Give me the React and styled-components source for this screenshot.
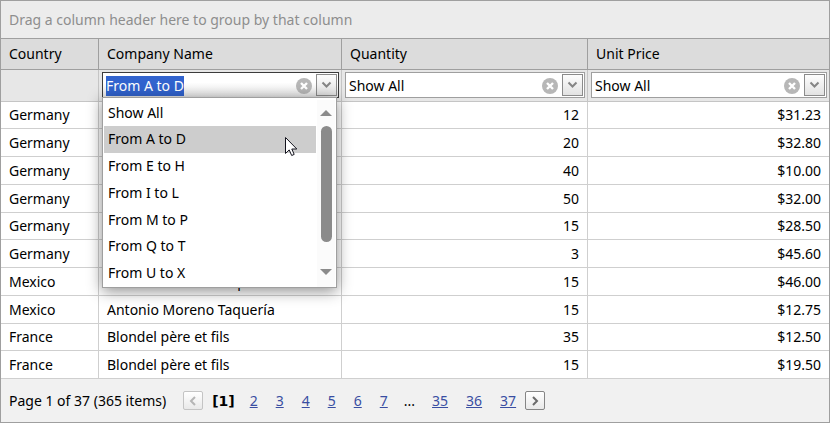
import React, { useEffect, useRef } from "react";
import styled, { createGlobalStyle } from "styled-components";

const GlobalStyle = createGlobalStyle`
  *, *::before, *::after { box-sizing: border-box; }
  body { margin: 0; background: #fff; }
  body, input, button {
    font-family: "Noto Sans", "Open Sans", sans-serif;
    font-size: 14px;
    line-height: 20px;
    color: #000;
  }
`;

const Grid = styled.main`
  border: 1px solid #9f9f9f;
  background: #fff;
`;

const GroupPanel = styled.div`
  padding: 9px 8px 8px;
  background: #ececec;
  border-bottom: 1px solid #9f9f9f;
  color: #8e8e8e;
`;

const Table = styled.table`
  width: 100%;
  table-layout: fixed;
  border-collapse: separate;
  border-spacing: 0;
`;

const Col = styled.col`
  width: ${(p) => p.$width}px;
`;

const HeaderCell = styled.th`
  height: 31px;
  padding: 0 8px;
  background: #dcdcdc;
  border-right: 1px solid #9f9f9f;
  border-bottom: 1px solid #9f9f9f;
  font-weight: 400;
  text-align: left;
  &:last-child { border-right: 0; }
`;

const FilterCell = styled.td`
  height: 32px;
  padding: 2px 2px 2px 3px;
  vertical-align: top;
  background: #e7e7e7;
  border-right: 1px solid #c5c5c5;
  border-bottom: 1px solid #c5c5c5;
  &:last-child { border-right: 0; }
`;

const Row = styled.tr`
  height: 28px;
  &:nth-child(4n + 1) { height: 27px; }
`;

const Cell = styled.td`
  padding: 0 8px;
  text-align: ${(p) => (p.$numeric ? "right" : "left")};
  border-right: 1px solid #cfcfcf;
  border-bottom: 1px solid #cfcfcf;
  &:last-child { border-right: 0; }
`;

const Combo = styled.div`
  position: relative;
  display: flex;
  align-items: center;
  height: 26px;
  padding: 1px;
  border: 1px solid ${(p) => (p.$active ? "#3c3c3c" : "#9f9f9f")};
  background: ${(p) =>
    p.$active ? "linear-gradient(#fff 40%, #e6e6e6)" : "#fff"};
`;

const ComboInput = styled.input`
  flex: 1;
  min-width: 0;
  height: 20px;
  margin: 2px 0 0;
  padding: 0 2px;
  border: 0;
  outline: 0;
  background: transparent;
  &::selection { background: #3163ce; color: #fff; }
`;

const ClearButton = styled.button`
  display: flex;
  padding: 0;
  margin: 2px 4px 0 0;
  border: 0;
  background: none;
`;

const DropButton = styled.button`
  display: flex;
  align-items: center;
  justify-content: center;
  width: 21px;
  height: 22px;
  padding: 0;
  border: 1px solid #8b8b8b;
  background: linear-gradient(#fdfdfd, #e2e2e2);
`;

const Popup = styled.div`
  position: absolute;
  z-index: 2;
  top: 24px;
  left: -1px;
  right: 1px;
  display: flex;
  padding: 2px 1px 0;
  background: #fff;
  border: 1px solid #9f9f9f;
  box-shadow: 0 3px 14px rgba(0, 0, 0, 0.45);
`;

const Options = styled.ul`
  flex: 1;
  margin: 0;
  padding: 0;
  list-style: none;
`;

const Option = styled.li`
  height: 27px;
  padding: 3px 4px;
  background: ${(p) => (p.$selected ? "#cdcdcd" : "transparent")};
  &:nth-child(4n + 1) { height: 26px; }
`;

const ScrollBar = styled.div`
  display: flex;
  flex-direction: column;
  align-items: center;
  width: 18px;
  margin-left: 1px;
  padding: 9px 0 11px;
  background: #fbfbfb;
`;

const Thumb = styled.div`
  width: 11px;
  height: 116px;
  margin: 10px 0 auto;
  border-radius: 6px;
  background: #8b8b8b;
`;

const Cursor = styled.svg`
  position: absolute;
  top: 39px;
  right: 38px;
`;

const Pager = styled.nav`
  display: flex;
  align-items: center;
  min-height: 43px;
  padding: 0 8px;
  background: #f1f1f1;
`;

const Summary = styled.span`
  margin-right: 17px;
`;

const PageButton = styled.button`
  display: flex;
  align-items: center;
  justify-content: center;
  width: 20px;
  height: 19px;
  padding: 0;
  border: 1px solid #858585;
  border-radius: 2px;
  background: linear-gradient(#fff, #e9e9e9);
  color: #6b6b6b;
  &:disabled { border-color: #c4c4c4; color: #b5b5b5; }
`;

const CurrentPage = styled.b`
  margin: 0 6px 0 9px;
  font-family: "DejaVu Sans", sans-serif;
`;

const PageLink = styled.a`
  margin: 0 9px;
  color: #394ea2;
  text-decoration: underline;
`;

const Ellipsis = styled.span`
  margin: 0 8px 0 7px;
`;

function FilterCombo({ label, value, active, children }) {
  const input = useRef(null);
  useEffect(() => {
    if (active) {
      input.current.focus();
      input.current.select();
    }
  }, [active]);
  return (
    <Combo $active={active}>
      <ComboInput
        ref={input}
        role="combobox"
        aria-label={label}
        aria-expanded={Boolean(active)}
        defaultValue={value}
      />
      <ClearButton aria-label={"Clear " + label}>
        <svg width="16" height="16" viewBox="0 0 16 16">
          <circle cx="8" cy="8" r="8" fill="#b7b7b7" />
          <path d="M5 5l6 6M11 5l-6 6" stroke="#fff" strokeWidth="2.4" />
        </svg>
      </ClearButton>
      <DropButton aria-label={"Open " + label}>
        <svg width="11" height="8" viewBox="0 0 11 8">
          <path d="M1.5 1.5l4 4 4-4" fill="none" stroke="#858585" strokeWidth="2" />
        </svg>
      </DropButton>
      {children}
    </Combo>
  );
}

const options = ["Show All", "From A to D", "From E to H", "From I to L", "From M to P", "From Q to T", "From U to X"];

function OptionPopup() {
  return (
    <Popup>
      <Options role="listbox" aria-label="Company Name ranges">
        {options.map((o) => (
          <Option key={o} role="option" aria-selected={o === "From A to D"} $selected={o === "From A to D"}>
            {o}
          </Option>
        ))}
      </Options>
      <ScrollBar aria-hidden="true">
        <svg width="12" height="7" viewBox="0 0 12 7"><path d="M0 7l6-6 6 6z" fill="#8b8b8b" /></svg>
        <Thumb />
        <svg width="12" height="7" viewBox="0 0 12 7"><path d="M0 0l6 6 6-6z" fill="#8b8b8b" /></svg>
      </ScrollBar>
      <Cursor width="13" height="20" viewBox="0 0 13 20">
        <path
          d="M.5 .5v16l3.7-3.6 2.5 5.6 2.5-1.1-2.4-5.4h5z"
          fill="#fff"
          stroke="#14141e"
        />
      </Cursor>
    </Popup>
  );
}

const rows = [
  ["Germany", "", "12", "$31.23"],
  ["Germany", "", "20", "$32.80"],
  ["Germany", "", "40", "$10.00"],
  ["Germany", "", "50", "$32.00"],
  ["Germany", "", "15", "$28.50"],
  ["Germany", "", "3", "$45.60"],
  ["Mexico", "Antonio Moreno Taquería", "15", "$46.00"],
  ["Mexico", "Antonio Moreno Taquería", "15", "$12.75"],
  ["France", "Blondel père et fils", "35", "$12.50"],
  ["France", "Blondel père et fils", "15", "$19.50"],
];

export default function App() {
  return (
    <>
      <GlobalStyle />
      <Grid>
        <GroupPanel>Drag a column header here to group by that column</GroupPanel>
        <Table>
          <colgroup>
            <Col $width={98} />
            <Col $width={243} />
            <Col $width={246} />
            <Col $width={241} />
          </colgroup>
          <thead>
            <tr>
              {["Country", "Company Name", "Quantity", "Unit Price"].map((h) => (
                <HeaderCell key={h} scope="col">{h}</HeaderCell>
              ))}
            </tr>
            <tr>
              <FilterCell />
              <FilterCell>
                <FilterCombo label="Company Name filter" value="From A to D" active>
                  <OptionPopup />
                </FilterCombo>
              </FilterCell>
              <FilterCell><FilterCombo label="Quantity filter" value="Show All" /></FilterCell>
              <FilterCell><FilterCombo label="Unit Price filter" value="Show All" /></FilterCell>
            </tr>
          </thead>
          <tbody>
            {rows.map((r, i) => (
              <Row key={i}>
                {r.map((c, j) => (
                  <Cell key={j} $numeric={j > 1}>{c}</Cell>
                ))}
              </Row>
            ))}
          </tbody>
        </Table>
        <Pager aria-label="Pages">
          <Summary>Page 1 of 37 (365 items)</Summary>
          <PageButton disabled aria-label="Previous page">
            <svg width="8" height="10" viewBox="0 0 8 10"><path d="M6 1L2 5l4 4" fill="none" stroke="currentColor" strokeWidth="2" /></svg>
          </PageButton>
          <CurrentPage aria-current="page">[1]</CurrentPage>
          {[2, 3, 4, 5, 6, 7].map((n) => <PageLink key={n} href={"#" + n}>{n}</PageLink>)}
          <Ellipsis>...</Ellipsis>
          {[35, 36, 37].map((n) => <PageLink key={n} href={"#" + n}>{n}</PageLink>)}
          <PageButton aria-label="Next page">
            <svg width="8" height="10" viewBox="0 0 8 10"><path d="M2 1l4 4-4 4" fill="none" stroke="currentColor" strokeWidth="2" /></svg>
          </PageButton>
        </Pager>
      </Grid>
    </>
  );
}
